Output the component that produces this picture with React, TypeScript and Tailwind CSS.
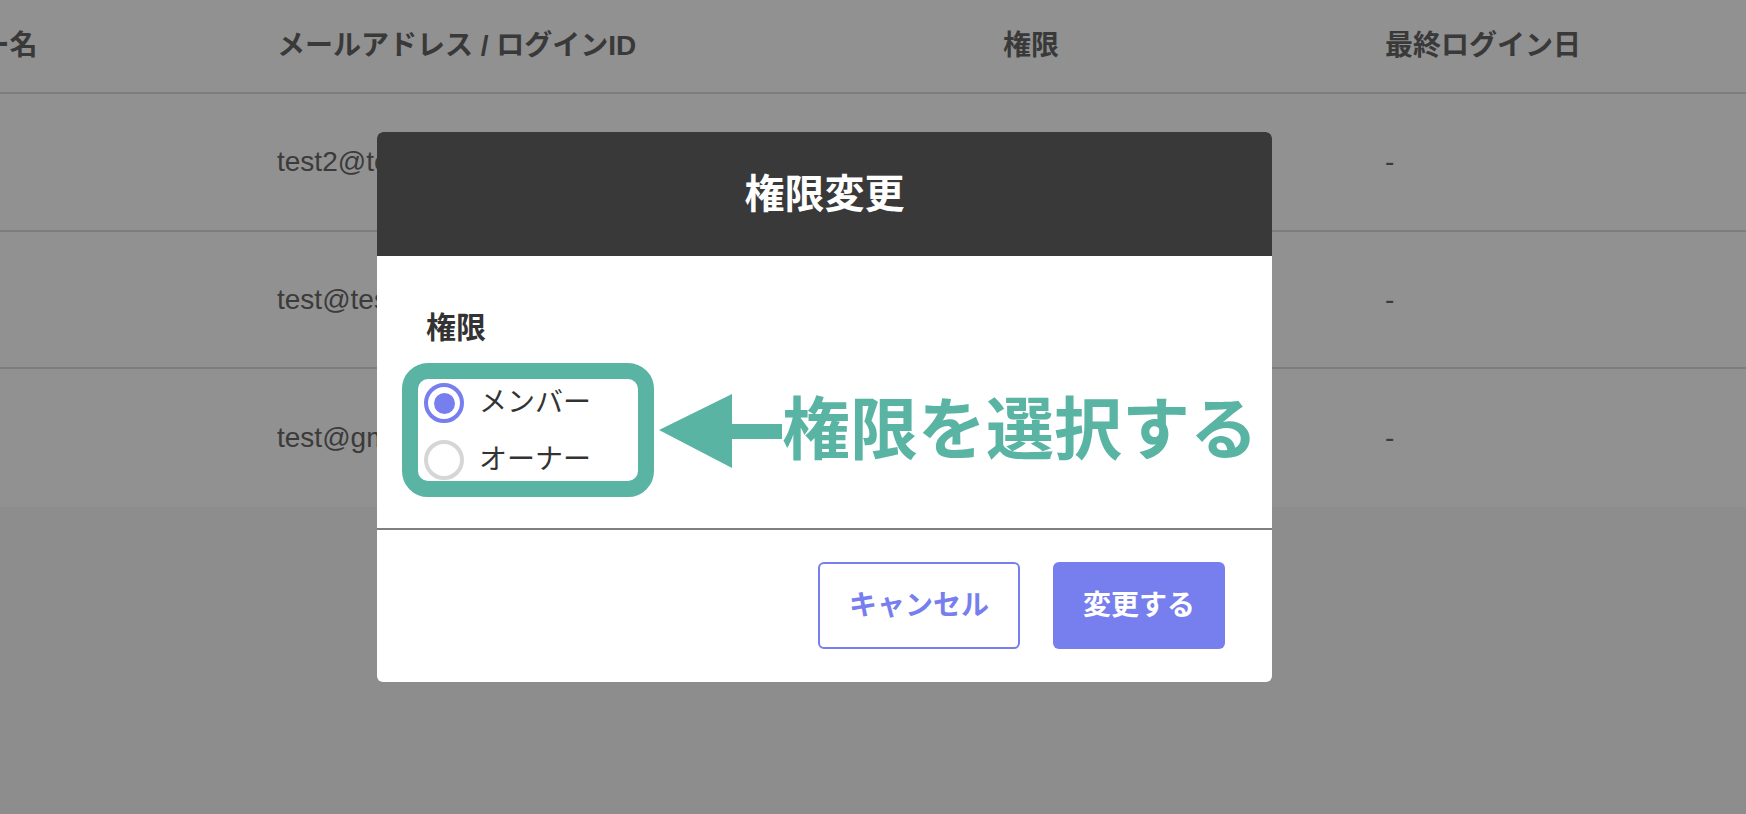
import { useState } from 'react'

type Member = {
  name: string
  email: string
  role: string
  lastLogin: string
}

const members: Member[] = [
  { name: 'テストユーザー2', email: 'test2@test.com', role: 'メンバー', lastLogin: '-' },
  { name: 'テストユーザー', email: 'test@test.com', role: 'メンバー', lastLogin: '-' },
  { name: 'テスト', email: 'test@gmail.com', role: 'オーナー', lastLogin: '-' },
]

const roles = ['メンバー', 'オーナー'] as const
type Role = (typeof roles)[number]

// --- Member table (sits behind the dialog) ---

function MemberTable() {
  return (
    <div className="ml-[-102px] w-[1848px] bg-white text-[28px] text-[#686868]">
      <div className="grid h-[94px] grid-cols-[379px_726px_382px_1fr] items-center border-b-2 border-[#dcdcdc] font-bold text-[#656565]">
        <span>ユーザー名</span>
        <span>メールアドレス / ログインID</span>
        <span>権限</span>
        <span>最終ログイン日</span>
      </div>
      {members.map((m, i) => (
        <div
          key={m.email}
          className={`grid grid-cols-[379px_726px_382px_1fr] items-center ${
            i === 0 ? 'h-[138px] border-b-2 border-[#dcdcdc]' : i === 1 ? 'h-[137px] border-b-2 border-[#dcdcdc]' : 'h-[138px]'
          }`}
        >
          <span className="invisible">{m.name}</span>
          <span>{m.email}</span>
          <span>{m.role}</span>
          <span>{m.lastLogin}</span>
        </div>
      ))}
    </div>
  )
}

// --- Radio ---

function RoleRadio({ label, checked, onSelect }: { label: Role; checked: boolean; onSelect: () => void }) {
  return (
    <button type="button" onClick={onSelect} className="flex items-center gap-[15px]">
      <span
        className={`flex h-[40px] w-[40px] items-center justify-center rounded-full border-4 ${
          checked ? 'border-[#777eed]' : 'border-[#d6d6d6]'
        }`}
      >
        {checked && <span className="h-[21px] w-[21px] rounded-full bg-[#777eed]" />}
      </span>
      <span className="text-[28px] leading-none text-[#333333]">{label}</span>
    </button>
  )
}

function LeftArrow() {
  return (
    <svg width="123" height="74" viewBox="0 0 123 74" className="shrink-0">
      <path d="M0 36 L73 0 L73 30 L123 30 L123 45 L73 45 L73 74 Z" fill="#5ab4a3" />
    </svg>
  )
}

// --- Dialog ---

function RoleDialog() {
  const [role, setRole] = useState<Role>('メンバー')

  return (
    <div className="mr-[97px] w-[895px] overflow-hidden rounded-[6px] bg-white">
      <div className="flex h-[124px] items-center justify-center bg-[#393939]">
        <h2 className="text-[40px] font-bold leading-none text-white">権限変更</h2>
      </div>

      <div className="pb-[31px] pl-[49px] pt-[57px]">
        <p className="text-[30px] font-bold leading-none text-[#333333]">権限</p>

        <div className="mt-[20px] flex items-center">
          {/* highlighted radio group */}
          <div className="ml-[-24px] h-[134px] w-[252px] rounded-[26px] border-[16px] border-[#5ab4a3] pl-[6px] pt-[4px]">
            <div className="flex flex-col gap-[17px]">
              {roles.map((r) => (
                <RoleRadio key={r} label={r} checked={role === r} onSelect={() => setRole(r)} />
              ))}
            </div>
          </div>
          <div className="ml-[5px] mt-[2px]">
            <LeftArrow />
          </div>
          <span className="text-[68px] font-bold leading-none text-[#5ab4a3]">権限を選択する</span>
        </div>
      </div>

      <div className="flex justify-end gap-[33px] border-t-2 border-[#7f7f7f] pb-[33px] pr-[47px] pt-[32px]">
        <button
          type="button"
          className="h-[87px] w-[202px] rounded-[6px] border-2 border-[#777eed] text-[28px] font-bold text-[#777eed]"
        >
          キャンセル
        </button>
        <button type="button" className="h-[87px] w-[172px] rounded-[6px] bg-[#777eed] text-[28px] font-bold text-white">
          変更する
        </button>
      </div>
    </div>
  )
}

export default function App() {
  return (
    <div className="relative h-[814px] w-full overflow-hidden bg-[#f8f8f8] font-['Liberation_Sans','Noto_Sans_CJK_JP',sans-serif]">
      <MemberTable />
      <div className="absolute inset-0 flex items-center justify-center bg-black/[0.43]">
        <RoleDialog />
      </div>
    </div>
  )
}
